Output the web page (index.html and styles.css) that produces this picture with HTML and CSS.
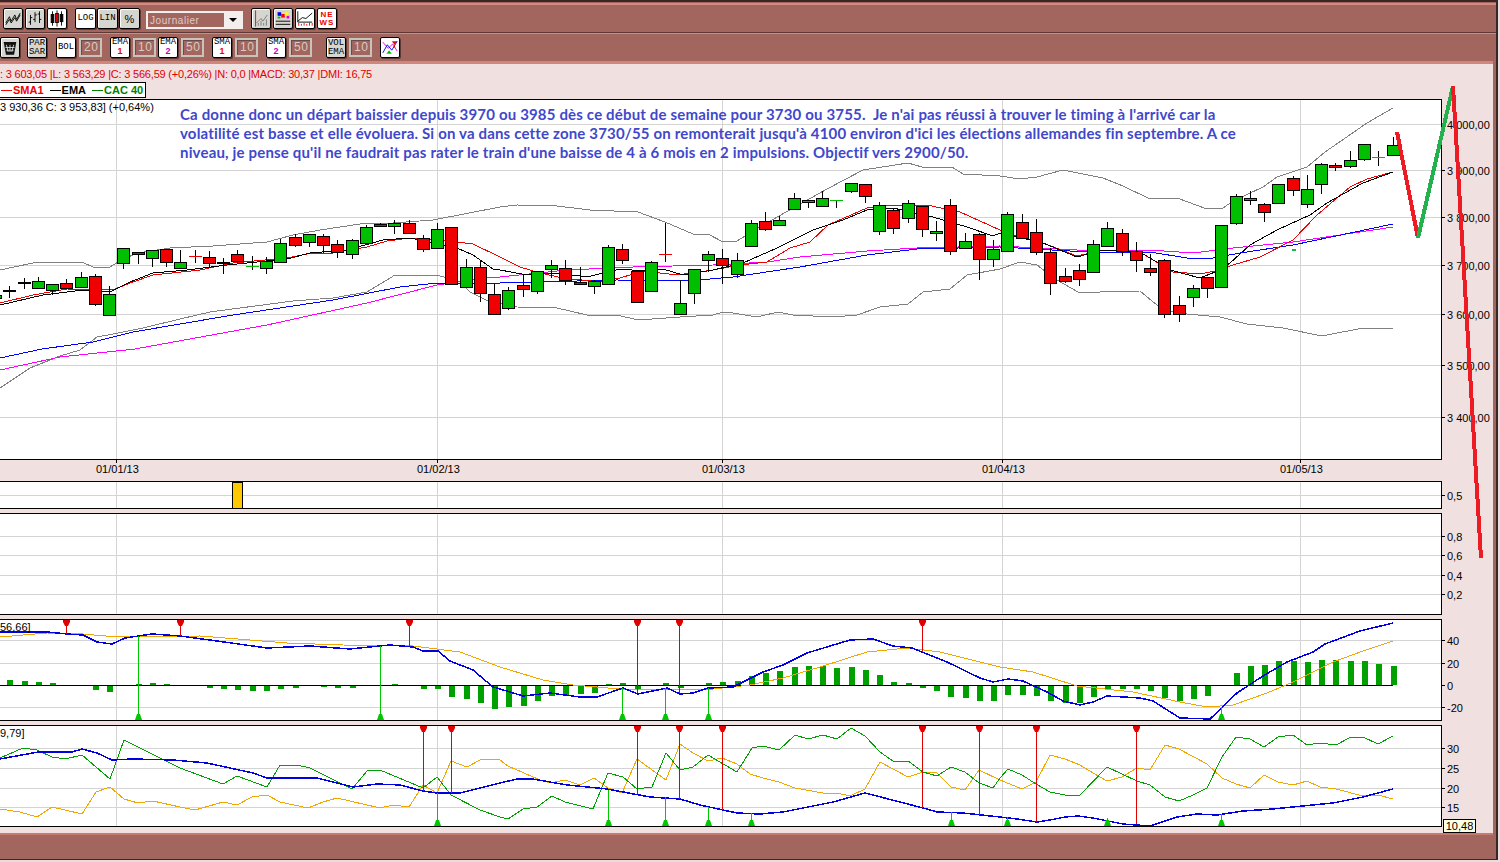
FILE: index.html
```html
<!DOCTYPE html>
<html>
<head>
    <title>Journalier</title>
    <link rel="stylesheet" href="styles.css">
</head>
<body>
    <div class="window">
        <div class="toolbar toolbar-top">
            <div class="tool-group gap-2">
                <div class="btn">
                    <svg viewBox="0 0 20 20"><path class="ico" d="M2 15L6 8L8 13L12 6L14 11L18 4"/><path class="ico" d="M2 17L6 11L8 15L12 9L14 13L18 6"/></svg>
                </div>
                <div class="btn">
                    <svg viewBox="0 0 20 20"><path class="ico" d="M5 6V17M3 14H5M5 9H7M10 3V14M8 11H10M10 6H12M15 2V15M13 5H15M15 11H17"/></svg>
                </div>
                <div class="btn btn-on">
                    <svg viewBox="0 0 20 20"><path class="ico" d="M5 2V18M10 1V19M15 2V18"/><rect class="candle-ico" x="3.5" y="5.5" width="3" height="9"/><rect class="candle-ico candle-red" x="8.5" y="4.5" width="3" height="10"/><rect class="candle-ico" x="13.5" y="5.5" width="3" height="8"/></svg>
                </div>
            </div>
            <div class="tool-group gap-1 ml-8">
                <div class="btn btn-wide btn-on btn-text">LOG</div>
                <div class="btn btn-wide btn-text">LIN</div>
                <div class="btn btn-wide btn-pct">%</div>
            </div>
            <div class="period-select ml-6">
                <span class="period-label">Journalier</span>
                <span class="period-arrow"><i></i></span>
            </div>
            <div class="tool-group gap-2 ml-8">
                <div class="btn">
                    <svg viewBox="0 0 20 20"><path class="ico-red" d="M4 1V19"/><path class="ico-gray" d="M5 15L10 10L12 13L17 6"/><path class="ico-gray" d="M7 18V15M10 18V13M13 18V15M16 18V11"/></svg>
                </div>
                <div class="btn">
                    <svg viewBox="0 0 20 20"><rect x="4" y="3" width="4" height="4" fill="#0000e0"/><rect x="8" y="5" width="4" height="4" fill="#ff0000"/><rect x="12" y="3" width="4" height="4" fill="#ffff00"/><rect x="4" y="8" width="3" height="2" fill="#00c000"/><rect x="14" y="7" width="3" height="3" fill="#e000e0"/><path class="ico" d="M2 13H18M2 16.5H18"/></svg>
                </div>
                <div class="btn btn-on">
                    <svg viewBox="0 0 20 20"><path class="ico" d="M2 13L7 9L11 10L18 4M2 2V14H18"/><path class="ico-red" d="M3 18V15M6 18V16M9 18V15M12 18V16M15 18V14M18 18V15"/></svg>
                </div>
                <div class="btn btn-on btn-news"><span>NE<br>WS</span></div>
            </div>
        </div>
        <div class="toolbar toolbar-bottom">
            <div class="btn">
                <svg viewBox="0 0 20 20"><path d="M3 4H17L14.5 18H5.5Z" fill="#111"/><path d="M6 7L8 15M10 7V15M14 7L12 15M5 10H15M6 13H14" stroke="#ddd" stroke-width="1" fill="none"/></svg>
            </div>
            <div class="btn btn-text ml-7"><span>PAR<br>SAR</span></div>
            <div class="btn btn-on btn-text ml-9">BOL</div>
            <div class="num-box">20</div>
            <div class="btn btn-on btn-text ml-8"><span>EMA<br><b class="num-red">1</b></span></div>
            <div class="num-box">10</div>
            <div class="btn btn-on btn-text ml-2"><span>EMA<br><b class="num-pink">2</b></span></div>
            <div class="num-box">50</div>
            <div class="btn btn-on btn-text ml-8"><span>SMA<br><b class="num-red">1</b></span></div>
            <div class="num-box">10</div>
            <div class="btn btn-on btn-text ml-8"><span>SMA<br><b class="num-pink">2</b></span></div>
            <div class="num-box">50</div>
            <div class="btn btn-text ml-14"><span>VOL<br>EMA</span></div>
            <div class="num-box">10</div>
            <div class="btn btn-on ml-8">
                <svg viewBox="0 0 20 20"><path d="M2 4L8 11L13 6L18 14" class="ico-pink"/><path d="M2 16L7 7L12 13L18 3" class="ico-blue"/><path d="M12 3H18L15 7Z" fill="#ff0000"/><path d="M15 7V10" class="ico-red"/><path d="M6 17H12L9 13Z" fill="#00c000"/></svg>
            </div>
        </div>

        <div class="workspace">
            <div class="status-line">: 3 603,05 |L: 3 563,29 |C: 3 566,59 (+0,26%) |N: 0,0 |MACD: 30,37 |DMI: 16,75</div>
            <div class="legend">
                <span class="legend-item legend-red"><i></i>SMA1</span>
                <span class="legend-item legend-black"><i></i>EMA</span>
                <span class="legend-item legend-green"><i></i>CAC 40</span>
            </div>

            <svg id="priceChart" class="chart chart-price"></svg>
            <svg id="volumeChart" class="chart chart-volume"></svg>
            <svg id="ratioChart" class="chart chart-pane"></svg>
            <svg id="macdChart" class="chart chart-pane"></svg>
            <svg id="dmiChart" class="chart chart-pane"></svg>

            <div class="annotation">Ca donne donc un départ baissier depuis 3970 ou 3985 dès ce début de semaine pour 3730 ou 3755.  Je n'ai pas réussi à trouver le timing à l'arrivé car la
volatilité est basse et elle évoluera. Si on va dans cette zone 3730/55 on remonterait jusqu'à 4100 environ d'ici les élections allemandes fin septembre. A ce
niveau, je pense qu'il ne faudrait pas rater le train d'une baisse de 4 à 6 mois en 2 impulsions. Objectif vers 2900/50.</div>
            <div class="value-tip">10,48</div>
        </div>
    </div>

    <svg class="scribble" viewBox="0 0 1500 862">
        <polyline class="scribble-red" points="1397,132 1418,238"/>
        <polyline class="scribble-green" points="1418,238 1453,86"/>
        <polyline class="scribble-red" points="1453,86 1481,558"/>
    </svg>

    <script src="script.js"></script>
</body>
</html>
```

FILE: styles.css
```css
* {
    box-sizing: border-box;
}

body {
    margin: 0;
    width: 1500px;
    height: 862px;
    overflow: hidden;
    position: relative;
    font-family: "Liberation Sans", Arial, sans-serif;
    background-color: #e6dede;
}

.window {
    width: 1498px;
    height: 860px;
    padding-top: 1px;
    border-top: 2px solid #3a2624;
    border-right: 2px solid #3a2624;
    border-bottom: 1px solid #3a2624;
    background-color: #a2665f;
}

.toolbar {
    display: flex;
    align-items: flex-start;
    background-color: #a2665f;
}

.toolbar-top {
    height: 30px;
    padding: 3px 0 0 3px;
    border-top: 2px solid #d38a80;
    border-bottom: 1px solid #5e3834;
}

.toolbar-bottom {
    height: 28px;
    padding-top: 3px;
    border-top: 1px solid #d38a80;
}

.tool-group {
    display: flex;
}

.gap-1 {
    gap: 1px;
}

.gap-2 {
    gap: 2px;
}

.ml-2 {
    margin-left: 2px;
}

.ml-6 {
    margin-left: 6px;
}

.ml-7 {
    margin-left: 7px;
}

.ml-8 {
    margin-left: 8px;
}

.ml-9 {
    margin-left: 9px;
}

.ml-14 {
    margin-left: 14px;
}

.btn {
    width: 20px;
    height: 21px;
    flex-shrink: 0;
    display: flex;
    align-items: center;
    justify-content: center;
    text-align: center;
    border: 1px solid #000;
    border-radius: 2px;
    background-color: #d6d6d0;
    box-shadow: inset 1px 1px 0 #fff, 1px 1px 0 #5e3834;
    color: #000;
}

.btn-wide {
    width: 21px;
}

.btn svg {
    width: 18px;
    height: 19px;
    display: block;
}

.btn-on {
    background-color: #fff;
}

.btn-text {
    font-family: "Liberation Mono", monospace;
    font-size: 9px;
    line-height: 9px;
}

.btn-text b {
    font-family: "Liberation Sans", Arial, sans-serif;
}

.btn-pct {
    font-size: 11px;
}

.btn-news {
    font-size: 8px;
    font-weight: bold;
    line-height: 8px;
    letter-spacing: 1px;
    color: #f00000;
}

.num-red {
    color: #f00000;
}

.num-pink {
    color: #c000c0;
}

.ico,
.ico-red,
.ico-gray,
.ico-pink,
.ico-blue {
    fill: none;
    stroke-width: 1;
}

.ico {
    stroke: #000;
}

.ico-red {
    stroke: #f00000;
}

.ico-gray {
    stroke: #777;
}

.ico-pink {
    stroke: #e000e0;
}

.ico-blue {
    stroke: #0000e0;
}

.candle-ico {
    fill: #000;
    stroke: #000;
}

.candle-red {
    fill: #f00000;
}

.num-box {
    width: 23px;
    height: 19px;
    margin-left: 3px;
    margin-top: 1px;
    padding-left: 3px;
    font-size: 12px;
    line-height: 15px;
    letter-spacing: 0.5px;
    color: #dcc8c2;
    background-color: #a2665f;
    border: 2px solid #c8c4bc;
    box-shadow: inset 1px 1px 0 #6c4a46;
}

.period-select {
    width: 97px;
    height: 18px;
    margin-top: 3px;
    display: flex;
    align-items: center;
    justify-content: space-between;
    padding-left: 2px;
    border: 2px solid #f4efec;
    background-color: #a2665f;
}

.period-label {
    font-size: 10px;
    letter-spacing: 0.55px;
    color: #e0ccc6;
}

.period-arrow {
    width: 17px;
    height: 14px;
    display: flex;
    align-items: center;
    justify-content: center;
    background-color: #f4efec;
}

.period-arrow i {
    width: 0;
    height: 0;
    border-left: 4px solid transparent;
    border-right: 4px solid transparent;
    border-top: 4px solid #000;
}

.workspace {
    position: relative;
    width: 1493px;
    height: 774px;
    border-top: 3px solid #d0867c;
    border-bottom: 2px solid #c87a70;
    background-color: #f0e0e0;
}

.status-line {
    height: 18px;
    font-size: 11px;
    line-height: 20px;
    letter-spacing: -0.2px;
    white-space: pre;
    color: #e00000;
}

.legend {
    width: 146px;
    height: 16px;
    margin-bottom: 1px;
    display: flex;
    align-items: center;
    background-color: #fff;
    border: 1px solid #000;
    border-left: none;
    font-size: 11px;
    font-weight: bold;
}

.legend-item {
    display: flex;
    align-items: center;
    white-space: nowrap;
    margin-right: 5px;
}

.legend-item i {
    width: 11px;
    height: 1px;
    margin: 0 1px 0 1px;
}

.legend-red {
    color: #f00000;
}

.legend-red i {
    background-color: #f00000;
}

.legend-black {
    color: #000;
}

.legend-black i {
    background-color: #000;
}

.legend-green {
    color: #008000;
}

.legend-green i {
    background-color: #008000;
}

.chart {
    display: block;
    width: 1493px;
}

.chart-price {
    height: 382px;
}

.chart-volume {
    height: 28px;
}

.chart-pane {
    height: 102px;
    margin-top: 4px;
}

.chart text {
    font-family: "Liberation Sans", Arial, sans-serif;
    font-size: 11px;
    fill: #000;
}

.plot-bg {
    fill: #fff;
}

.plot-frame {
    fill: none;
    stroke: #000;
    stroke-width: 1;
}

.grid {
    stroke: #d4d4d4;
    stroke-width: 1;
}

.tick {
    stroke: #000;
    stroke-width: 1;
}

.series {
    fill: none;
    stroke-width: 1;
    shape-rendering: crispEdges;
}

.series-wide {
    stroke-width: 1.5;
}

.annotation {
    position: absolute;
    left: 180px;
    top: 41px;
    white-space: pre;
    font-family: Lato, "Open Sans", sans-serif;
    font-size: 15px;
    font-weight: bold;
    letter-spacing: 0.17px;
    line-height: 19px;
    color: #3f48cc;
}

.value-tip {
    position: absolute;
    left: 1443px;
    top: 755px;
    width: 33px;
    height: 14px;
    font-size: 11px;
    line-height: 13px;
    text-align: center;
    background-color: #ffffe1;
    border: 1px solid #000;
}

.scribble {
    position: absolute;
    top: 0;
    left: 0;
    width: 1500px;
    height: 862px;
    pointer-events: none;
}

.scribble polyline {
    fill: none;
    stroke-width: 4;
    shape-rendering: crispEdges;
}

.scribble-red {
    stroke: #ed1c24;
}

.scribble-green {
    stroke: #22b14c;
}
```

FILE: script.js
```js
var SVG_NS = "http://www.w3.org/2000/svg";
var RIGHT = 1441;
var GRID_X = [116, 437, 722, 1002, 1300];

// body top, body bottom, wick top, wick bottom, colour. First entry sits just left of the page.
var candles = [
    [295, 298, 295, 298, "g"], [290, 290, 286, 298, "k"], [282, 283, 278, 289, "k"], [281, 288, 277, 288, "g"],
    [284, 290, 284, 295, "g"], [283, 288, 279, 289, "r"], [277, 287, 272, 288, "g"], [276, 304, 274, 306, "r"],
    [294, 315, 286, 315, "g"], [248, 263, 248, 269, "g"], [252, 254, 252, 264, "r"], [250, 258, 250, 267, "g"],
    [249, 262, 249, 267, "r"], [262, 268, 250, 269, "g"], [256, 256, 250, 263, "r"], [257, 263, 251, 268, "r"],
    [262, 262, 258, 274, "k"], [254, 261, 250, 263, "r"], [266, 266, 256, 270, "g"], [261, 268, 257, 274, "g"],
    [243, 262, 239, 262, "g"], [237, 245, 234, 247, "r"], [234, 242, 234, 247, "g"], [236, 245, 234, 253, "r"],
    [244, 252, 240, 258, "r"], [240, 254, 239, 259, "g"], [227, 243, 225, 243, "g"], [224, 226, 223, 226, "r"],
    [223, 226, 220, 234, "g"], [223, 233, 220, 233, "r"], [238, 249, 235, 252, "r"], [229, 248, 223, 249, "g"],
    [227, 284, 227, 284, "r"], [267, 287, 259, 287, "g"], [267, 293, 261, 302, "r"], [294, 314, 284, 314, "r"],
    [290, 308, 287, 310, "g"], [285, 289, 275, 297, "r"], [271, 291, 271, 294, "g"], [265, 269, 260, 278, "g"],
    [268, 280, 260, 285, "r"], [282, 284, 267, 285, "r"], [281, 286, 280, 294, "g"], [247, 284, 245, 284, "g"],
    [249, 260, 244, 264, "r"], [271, 302, 271, 303, "r"], [262, 291, 261, 292, "g"], [254, 254, 223, 262, "r"],
    [303, 314, 280, 314, "g"], [269, 293, 269, 304, "g"], [254, 260, 251, 272, "g"], [258, 265, 249, 284, "r"],
    [260, 274, 253, 278, "g"], [223, 246, 220, 247, "g"], [221, 229, 212, 231, "r"], [220, 225, 216, 226, "g"],
    [198, 209, 193, 210, "g"], [200, 202, 200, 208, "g"], [198, 206, 191, 206, "g"], [200, 200, 200, 208, "g"],
    [183, 191, 183, 193, "g"], [184, 196, 184, 203, "r"], [205, 231, 202, 235, "g"], [210, 228, 208, 234, "r"],
    [203, 218, 200, 223, "g"], [206, 229, 206, 237, "r"], [231, 233, 221, 241, "g"], [205, 251, 199, 255, "r"],
    [241, 248, 233, 249, "g"], [234, 259, 233, 280, "r"], [249, 259, 240, 267, "g"], [214, 251, 212, 251, "g"],
    [222, 238, 214, 239, "r"], [232, 252, 219, 255, "r"], [252, 283, 248, 295, "r"], [276, 281, 268, 283, "r"],
    [270, 279, 264, 286, "r"], [244, 272, 240, 272, "g"], [228, 246, 222, 247, "g"], [233, 251, 229, 256, "r"],
    [251, 260, 242, 272, "r"], [268, 272, 254, 276, "r"], [260, 314, 259, 318, "r"], [305, 314, 296, 322, "r"],
    [288, 297, 285, 307, "g"], [277, 288, 277, 298, "r"], [225, 287, 225, 287, "g"], [196, 223, 194, 225, "g"],
    [198, 200, 191, 205, "g"], [204, 212, 203, 222, "r"], [184, 203, 184, 203, "g"], [178, 190, 176, 196, "r"],
    [189, 204, 175, 208, "g"], [164, 184, 163, 194, "g"], [165, 167, 163, 171, "r"], [160, 166, 151, 168, "g"],
    [144, 159, 144, 161, "g"], [157, 157, 151, 166, "g"], [145, 155, 137, 156, "g"]
];

// macd histogram, in px from the zero line, k = 0..97
var histogram = [
    -5, -4, -3, -2, 0, 0, 4, 6, 0, -1, -2, -1, 0, 0, 2, 3, 4, 5, 5, 3, 2, 0, 1, 2, 2, 0, 0, -1, 0, 3, 3, 11, 13, 17, 23,
    21, 20, 15, 10, 9, 8, 7, -1, -2, 4, 0, -2, 2, 0, -2, -3, -4, -9, -12, -14, -18, -19, -19, -17, -18, -15, -10, -3, -2,
    2, 5, 11, 12, 15, 15, 9, 9, 10, 15, 17, 17, 11, 4, 3, 3, 5, 12, 15, 13, 10, 0, -12, -19, -20, -24, -24, -23, -25, -25,
    -24, -24, -21, -19
];

var upperBand = "0,270 33,263 50,262 82,262 95,268 110,267 123,259 138,253 170,248 213,246 267,242 293,235 320,230 360,224 393,223 433,220 500,207 517,205 557,206 590,210 638,212 665,222 693,234 708,234 723,242 737,241 760,227 793,208 827,189 863,170 908,163 922,167 952,167 963,174 1000,176 1020,179 1037,177 1063,170 1103,178 1123,186 1150,199 1177,198 1207,209 1223,208 1233,201 1263,187 1277,177 1307,167 1325,152 1367,123 1393,108";
var lowerBand = "0,388 30,368 60,356 80,350 97,337 113,334 143,328 180,319 210,312 240,308 293,301 333,298 367,292 395,275 437,275 460,282 470,292 490,302 500,303 517,307 557,308 587,315 617,315 638,320 680,317 713,315 723,312 733,313 757,317 778,312 793,315 833,317 857,315 880,307 908,304 923,292 950,289 967,275 1000,269 1020,262 1037,265 1057,280 1078,292 1100,292 1140,291 1163,310 1187,314 1220,317 1247,324 1283,328 1322,336 1363,328 1393,328";
var redAvg = "0,303 33,295 67,289 112,290 133,282 153,275 200,270 233,263 287,258 307,254 333,253 367,247 387,241 410,238 457,242 473,244 500,257 520,267 540,273 563,278 600,282 620,278 643,271 677,275 713,270 740,265 767,262 790,248 810,242 828,225 867,208 893,205 927,205 960,212 1000,230 1020,237 1043,243 1077,256 1103,250 1140,252 1173,272 1200,274 1220,270 1233,265 1260,257 1293,240 1317,215 1350,187 1367,179 1393,172";
var blackAvg = "0,305 43,295 83,290 110,292 130,282 153,273 187,270 227,265 287,259 310,253 347,250 383,240 410,238 457,248 473,255 493,269 500,270 527,275 557,273 587,277 620,269 643,271 663,269 683,275 713,270 743,263 777,248 813,230 843,220 867,210 893,208 933,217 967,227 993,236 1000,233 1043,243 1077,257 1103,250 1140,252 1170,270 1200,278 1220,270 1230,263 1250,245 1277,230 1310,215 1327,203 1363,183 1393,172";
var blueAvg = "0,358 42,349 93,342 133,332 233,315 333,300 400,287 437,283 500,283 617,280 687,281 733,277 800,267 867,255 917,249 1000,247 1087,252 1150,252 1187,258 1213,258 1240,253 1293,245 1393,224";
var pinkAvg = "0,370 60,357 135,349 267,325 367,303 437,285 487,278 500,277 567,270 633,267 713,265 767,262 800,257 867,251 917,248 1000,246 1077,250 1150,250 1193,253 1233,248 1293,242 1393,227";

var macdBlue = "0,632 47,632 67,634 83,635 97,642 112,644 125,638 152,634 180,636 217,641 267,648 310,646 350,649 390,645 413,647 423,651 438,651 450,661 473,670 493,687 500,689 523,696 550,693 580,697 597,697 623,688 638,694 667,688 680,694 693,693 708,688 733,687 763,672 783,665 807,653 850,640 873,639 893,646 912,648 947,662 980,678 993,682 1008,679 1023,681 1047,692 1063,701 1080,705 1093,702 1107,696 1140,698 1153,701 1180,718 1210,719 1237,693 1263,676 1287,662 1313,652 1325,644 1360,631 1393,623";
var macdOrange = "0,637 47,633 83,634 117,637 200,636 250,640 287,643 343,645 413,646 460,652 500,667 543,680 573,685 620,689 667,689 713,689 750,685 783,678 820,667 867,652 907,648 940,652 1000,667 1033,672 1077,686 1133,692 1180,702 1207,707 1233,705 1267,693 1293,682 1333,662 1363,651 1393,641";

var dmiBlue = "0,759 38,752 72,752 82,749 97,753 112,760 133,759 173,760 207,763 253,773 267,778 317,778 353,787 377,784 400,785 423,791 437,793 460,793 500,783 517,779 533,779 567,785 607,789 650,797 680,799 700,805 723,810 737,813 760,814 783,812 833,802 865,793 900,802 923,808 937,812 963,813 1000,817 1017,819 1037,822 1050,820 1065,817 1078,816 1093,818 1123,824 1150,826 1177,817 1197,814 1217,815 1243,811 1273,809 1333,803 1363,797 1393,789";
var dmiGreen = "0,758 23,748 37,750 52,757 65,759 82,755 110,779 124,740 180,768 223,784 237,776 267,787 280,765 297,765 310,768 352,789 367,771 380,770 423,788 437,777 451,795 480,810 500,817 508,819 523,809 537,807 552,796 565,802 593,809 608,773 623,777 637,789 652,787 666,753 680,770 693,767 708,755 737,772 752,748 763,746 779,750 795,735 808,739 823,735 837,739 851,728 865,736 880,752 893,761 908,761 923,772 937,776 951,767 965,772 979,783 993,788 1000,778 1008,769 1022,775 1036,784 1050,792 1065,795 1080,795 1107,767 1137,781 1150,785 1165,797 1179,801 1193,795 1207,788 1222,757 1236,737 1250,739 1264,747 1278,737 1293,735 1307,745 1320,743 1336,745 1349,738 1363,737 1378,744 1393,736";
var dmiOrange = "0,809 20,812 37,817 52,807 82,814 96,792 110,787 124,799 138,803 153,801 180,807 195,810 223,802 237,805 252,797 267,795 280,802 308,808 323,802 337,798 380,808 393,805 409,807 423,785 437,793 451,761 467,767 482,759 500,760 508,766 540,780 550,783 565,780 580,785 594,778 608,788 622,793 637,759 666,780 680,744 693,753 708,761 722,758 737,764 750,774 763,778 779,782 795,788 823,793 837,793 850,796 865,789 880,762 908,777 923,772 937,773 951,787 965,790 979,770 1000,780 1022,789 1036,782 1050,755 1065,759 1080,765 1093,773 1107,781 1122,777 1137,768 1150,770 1165,745 1179,749 1207,764 1222,778 1236,784 1250,788 1264,775 1278,782 1293,785 1307,781 1320,787 1336,789 1363,796 1378,795 1393,799";

function add(svg, name, attrs, text) {
    var el = document.createElementNS(SVG_NS, name);
    for (var key in attrs) {
        el.setAttribute(key, attrs[key]);
    }
    if (text) {
        el.textContent = text;
    }
    svg.appendChild(el);
    return el;
}

function candleX(k) {
    return Math.round(9.3 + 14.26 * k);
}

// every pane uses page coordinates through its viewBox
function setupPane(id, top, bottom, svgBottom) {
    var svg = document.getElementById(id);
    var end = svgBottom || bottom + 1;
    svg.setAttribute("viewBox", "0 " + top + " 1493 " + (end - top));
    add(svg, "rect", { "class": "plot-bg", x: 0, y: top, width: RIGHT, height: bottom - top });
    GRID_X.forEach(function (x) {
        add(svg, "line", { "class": "grid", x1: x + 0.5, x2: x + 0.5, y1: top, y2: bottom });
    });
    return svg;
}

function frame(svg, top, bottom) {
    add(svg, "rect", { "class": "plot-frame", x: -2, y: top + 0.5, width: RIGHT + 2.5, height: bottom - top });
}

function gridRow(svg, y, label) {
    add(svg, "line", { "class": "grid", x1: 0, x2: RIGHT, y1: y + 0.5, y2: y + 0.5 });
    add(svg, "line", { "class": "tick", x1: RIGHT, x2: RIGHT + 4, y1: y + 0.5, y2: y + 0.5 });
    add(svg, "text", { x: 1447, y: y + 4.5 }, label);
}

function series(svg, points, color, wide) {
    add(svg, "polyline", {
        "class": wide ? "series series-wide" : "series",
        points: points,
        stroke: color
    });
}

function sellMark(svg, x, top, endY) {
    add(svg, "line", { x1: x + 0.5, x2: x + 0.5, y1: top, y2: endY, stroke: "#e00000" });
    add(svg, "polygon", {
        points: [x - 3, top, x + 4, top, x + 4, top + 3, x + 2, top + 7, x - 1, top + 7, x - 3, top + 3].join(","),
        fill: "#e00000"
    });
}

function buyMark(svg, x, bottom, startY) {
    add(svg, "line", { x1: x + 0.5, x2: x + 0.5, y1: startY, y2: bottom, stroke: "#00c800" });
    add(svg, "polygon", {
        points: [x - 3, bottom, x + 4, bottom, x + 2, bottom - 6, x - 1, bottom - 6].join(","),
        fill: "#00c800"
    });
}

function drawCandles(svg) {
    candles.forEach(function (c, i) {
        var x = candleX(i - 1);
        var fill = c[4] === "g" ? "#00be00" : "#f00000";
        add(svg, "rect", { x: x, y: c[2], width: 1, height: c[3] - c[2], fill: "#000" });
        if (c[0] === c[1]) {
            add(svg, "rect", {
                x: x - 6,
                y: c[0],
                width: 13,
                height: c[4] === "k" ? 2 : 1,
                fill: c[4] === "k" ? "#000" : fill
            });
        } else {
            add(svg, "rect", {
                x: x - 5.5,
                y: c[0] + 0.5,
                width: 12,
                height: c[1] - c[0],
                fill: fill,
                stroke: "#000"
            });
        }
    });
}

function drawPrice() {
    var svg = setupPane("priceChart", 99, 459, 481);
    var rows = [[124, "4 000,00"], [170, "3 900,00"], [217, "3 800,00"], [265, "3 700,00"], [314, "3 600,00"], [365, "3 500,00"], [417, "3 400,00"]];
    rows.forEach(function (r) {
        gridRow(svg, r[0], r[1]);
    });
    series(svg, upperBand, "#808080");
    series(svg, lowerBand, "#808080");
    series(svg, pinkAvg, "#ff00ff");
    series(svg, blueAvg, "#0000ff");
    series(svg, redAvg, "#f00000");
    series(svg, blackAvg, "#000");
    drawCandles(svg);
    add(svg, "rect", { x: 1292, y: 249, width: 4, height: 2, fill: "#22b14c" });
    add(svg, "text", { x: 0, y: 111 }, "3 930,36   C: 3 953,83] (+0,64%)");
    frame(svg, 99, 459);
    var dates = [[116, "01/01/13"], [437, "01/02/13"], [722, "01/03/13"], [1002, "01/04/13"], [1300, "01/05/13"]];
    dates.forEach(function (d) {
        add(svg, "line", { "class": "tick", x1: d[0] + 0.5, x2: d[0] + 0.5, y1: 459, y2: 463 });
        add(svg, "text", { x: d[0] - 20, y: 473 }, d[1]);
    });
}

function drawVolume() {
    var svg = setupPane("volumeChart", 481, 508);
    gridRow(svg, 495, "0,5");
    add(svg, "rect", { x: 232.5, y: 482.5, width: 10, height: 26, fill: "#ffc800", stroke: "#000" });
    frame(svg, 481, 508);
}

function drawRatio() {
    var svg = setupPane("ratioChart", 513, 614);
    gridRow(svg, 536, "0,8");
    gridRow(svg, 555, "0,6");
    gridRow(svg, 575, "0,4");
    gridRow(svg, 594, "0,2");
    frame(svg, 513, 614);
}

function drawMacd() {
    var svg = setupPane("macdChart", 619, 720);
    gridRow(svg, 640, "40");
    gridRow(svg, 663, "20");
    gridRow(svg, 707, "-20");
    add(svg, "line", { "class": "tick", x1: 0, x2: 1393, y1: 685.5, y2: 685.5 });
    add(svg, "line", { "class": "tick", x1: RIGHT, x2: RIGHT + 4, y1: 685.5, y2: 685.5 });
    add(svg, "text", { x: 1447, y: 690 }, "0");
    histogram.forEach(function (h, k) {
        if (h !== 0) {
            add(svg, "rect", {
                x: candleX(k) - 2,
                y: h < 0 ? 685 + h : 686,
                width: 6,
                height: Math.abs(h),
                fill: "#00a000"
            });
        }
    });
    series(svg, macdOrange, "#f0a800");
    series(svg, macdBlue, "#0000e0", true);
    [[66, 634], [180, 636], [409, 646], [637, 693], [679, 693], [922, 652]].forEach(function (m) {
        sellMark(svg, m[0], 619, m[1]);
    });
    [[138, 636], [380, 646], [622, 688], [665, 688], [708, 688], [1221, 707]].forEach(function (m) {
        buyMark(svg, m[0], 720, m[1]);
    });
    add(svg, "text", { x: 0, y: 631 }, "56,66]");
    frame(svg, 619, 720);
}

function drawDmi() {
    var svg = setupPane("dmiChart", 725, 826);
    gridRow(svg, 748, "30");
    gridRow(svg, 768, "25");
    gridRow(svg, 788, "20");
    gridRow(svg, 807, "15");
    series(svg, dmiOrange, "#f0a800");
    series(svg, dmiGreen, "#00a000");
    series(svg, dmiBlue, "#0000e0", true);
    [[423, 791], [451, 793], [637, 794], [679, 799], [722, 810], [922, 808], [979, 815], [1036, 822], [1136, 824]].forEach(function (m) {
        sellMark(svg, m[0], 725, m[1]);
    });
    [[437, 793], [608, 790], [665, 797], [708, 807], [751, 813], [951, 812], [1007, 817], [1107, 818], [1221, 814]].forEach(function (m) {
        buyMark(svg, m[0], 826, m[1]);
    });
    add(svg, "text", { x: 0, y: 737 }, "9,79]");
    frame(svg, 725, 826);
}

drawPrice();
drawVolume();
drawRatio();
drawMacd();
drawDmi();
```
